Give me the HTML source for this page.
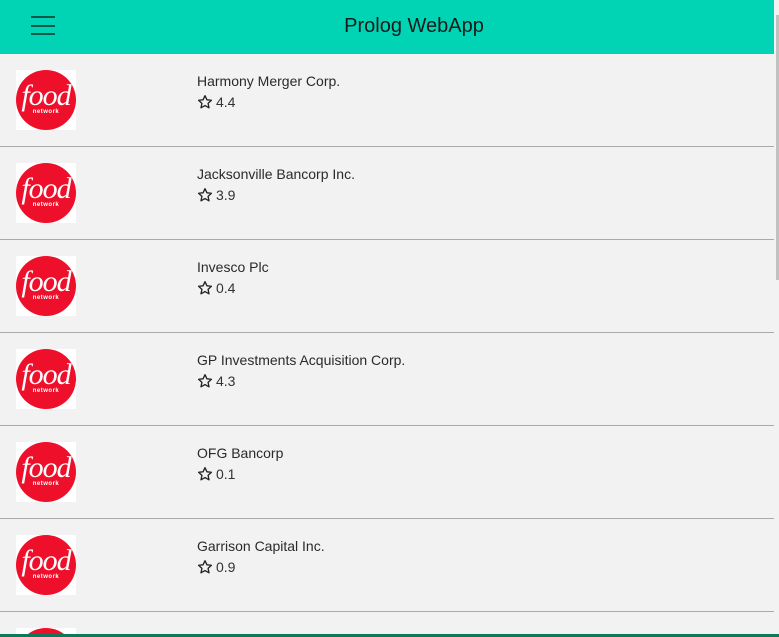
<!DOCTYPE html>
<html style="height:637px;overflow:hidden"><head><style>
body{margin:0;width:779px;height:637px;overflow:hidden;background:#f1f2f1;font-family:"Liberation Sans",sans-serif;position:relative}
.hdr{position:absolute;left:0;top:0;width:774px;height:54px;background:#00d4b4}
.hdr .t{position:absolute;left:0;width:828px;top:15px;text-align:center;font-size:20px;color:#1a1a1a}
.bar{position:absolute;left:31px;width:24px;height:2px;background:#0a5a4a}
.row{position:absolute;left:0;width:774px;height:92px;border-bottom:1px solid #aaa}
.logo{position:absolute;left:16px;top:16px;width:60px;height:60px;background:#fff}
.logo div{position:absolute;left:0;top:0;width:60px;height:60px;border-radius:50%;background:#ee0f2b;color:#fff;text-align:center}
.logo b{display:block;font-family:"Liberation Serif",serif;font-style:italic;font-weight:normal;font-size:30px;line-height:28px;margin-top:12px;letter-spacing:-1px}
.logo i{display:block;font-style:normal;font-size:6px;font-weight:bold;margin-top:-1px;letter-spacing:.5px}
.name{position:absolute;left:197px;top:19px;font-size:14px;color:#2a2a2a}
.rate{position:absolute;left:197px;top:40px;font-size:14px;color:#333}
.rate svg{vertical-align:-3px;margin-right:3px}
.sb{position:absolute;left:776px;top:15px;width:3px;height:265px;background:#c1c1c1}
.task{position:absolute;left:0;top:634px;width:779px;height:3px;background:#0a7a5a}
</style></head><body>
<div class="hdr"><div class="bar" style="top:16px"></div><div class="bar" style="top:25px"></div><div class="bar" style="top:33px"></div><div class="t">Prolog WebApp</div></div>
<div class="row" style="top:54px"><div class="logo"><div><b>food</b><i>network</i></div></div><div class="name">Harmony Merger Corp.</div><div class="rate"><svg width="16" height="16" viewBox="0 0 24 24"><path d="M12 2.5l2.9 6.2 6.7.7-5 4.6 1.4 6.7L12 17.3l-6 3.4 1.4-6.7-5-4.6 6.7-.7z" fill="none" stroke="#222" stroke-width="2" stroke-linejoin="round"/></svg>4.4</div></div>
<div class="row" style="top:147px"><div class="logo"><div><b>food</b><i>network</i></div></div><div class="name">Jacksonville Bancorp Inc.</div><div class="rate"><svg width="16" height="16" viewBox="0 0 24 24"><path d="M12 2.5l2.9 6.2 6.7.7-5 4.6 1.4 6.7L12 17.3l-6 3.4 1.4-6.7-5-4.6 6.7-.7z" fill="none" stroke="#222" stroke-width="2" stroke-linejoin="round"/></svg>3.9</div></div>
<div class="row" style="top:240px"><div class="logo"><div><b>food</b><i>network</i></div></div><div class="name">Invesco Plc</div><div class="rate"><svg width="16" height="16" viewBox="0 0 24 24"><path d="M12 2.5l2.9 6.2 6.7.7-5 4.6 1.4 6.7L12 17.3l-6 3.4 1.4-6.7-5-4.6 6.7-.7z" fill="none" stroke="#222" stroke-width="2" stroke-linejoin="round"/></svg>0.4</div></div>
<div class="row" style="top:333px"><div class="logo"><div><b>food</b><i>network</i></div></div><div class="name">GP Investments Acquisition Corp.</div><div class="rate"><svg width="16" height="16" viewBox="0 0 24 24"><path d="M12 2.5l2.9 6.2 6.7.7-5 4.6 1.4 6.7L12 17.3l-6 3.4 1.4-6.7-5-4.6 6.7-.7z" fill="none" stroke="#222" stroke-width="2" stroke-linejoin="round"/></svg>4.3</div></div>
<div class="row" style="top:426px"><div class="logo"><div><b>food</b><i>network</i></div></div><div class="name">OFG Bancorp</div><div class="rate"><svg width="16" height="16" viewBox="0 0 24 24"><path d="M12 2.5l2.9 6.2 6.7.7-5 4.6 1.4 6.7L12 17.3l-6 3.4 1.4-6.7-5-4.6 6.7-.7z" fill="none" stroke="#222" stroke-width="2" stroke-linejoin="round"/></svg>0.1</div></div>
<div class="row" style="top:519px"><div class="logo"><div><b>food</b><i>network</i></div></div><div class="name">Garrison Capital Inc.</div><div class="rate"><svg width="16" height="16" viewBox="0 0 24 24"><path d="M12 2.5l2.9 6.2 6.7.7-5 4.6 1.4 6.7L12 17.3l-6 3.4 1.4-6.7-5-4.6 6.7-.7z" fill="none" stroke="#222" stroke-width="2" stroke-linejoin="round"/></svg>0.9</div></div>
<div class="row" style="top:612px;height:22px;overflow:hidden;border:0"><div class="logo"><div><b>food</b><i>network</i></div></div></div>
<div class="sb"></div>
<div class="task"></div>
</body></html>
